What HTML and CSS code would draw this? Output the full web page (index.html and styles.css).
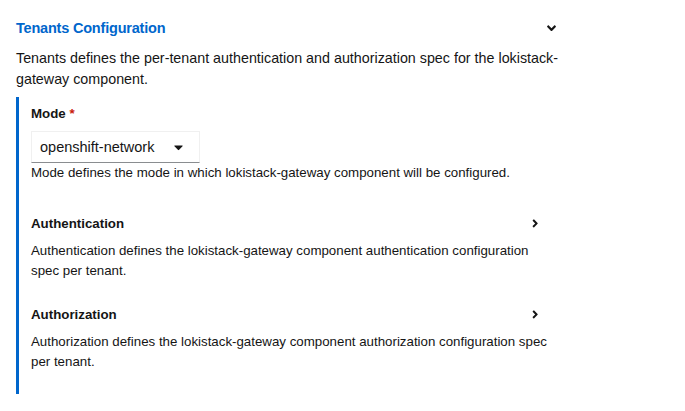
FILE: index.html
```html
<!DOCTYPE html>
<html lang="en">
<head>
<meta charset="utf-8">
<title>Tenants Configuration</title>
<link rel="stylesheet" href="styles.css">
</head>
<body>
<div class="page">
  <section class="section">
    <div class="section-header">
      <h2 class="title">Tenants Configuration</h2>
      <span class="toggle">
        <svg class="icon-down" viewBox="0 0 320 512" aria-hidden="true"><path d="M143 352.3L7 216.3c-9.4-9.4-9.4-24.6 0-33.9l22.6-22.6c9.4-9.4 24.6-9.4 33.9 0l96.4 96.4 96.4-96.4c9.4-9.4 24.6-9.4 33.9 0l22.6 22.6c9.4 9.4 9.4 24.6 0 33.9l-136 136c-9.2 9.4-24.4 9.4-33.8 0z"/></svg>
      </span>
    </div>
    <p class="desc">Tenants defines the per-tenant authentication and authorization spec for the lokistack-gateway component.</p>
    <div class="group">
      <div class="field">
        <label class="label">Mode <span class="req">*</span></label>
        <div class="select">
          <span class="select-text">openshift-network</span>
          <svg class="icon-caret" viewBox="0 0 320 512" aria-hidden="true"><path d="M31.3 192h257.3c17.8 0 26.7 21.5 14.1 34.1L174.1 354.8c-7.8 7.8-20.5 7.8-28.3 0L17.2 226.1C4.6 213.5 13.5 192 31.3 192z"/></svg>
        </div>
        <p class="help">Mode defines the mode in which lokistack-gateway component will be configured.</p>
      </div>
      <div class="item">
        <div class="item-header">
          <span class="item-title">Authentication</span>
          <svg class="icon-right" viewBox="0 0 256 512" aria-hidden="true"><path d="M224.3 273l-136 136c-9.4 9.4-24.6 9.4-33.9 0l-22.6-22.6c-9.4-9.4-9.4-24.6 0-33.9l96.4-96.4-96.4-96.4c-9.4-9.4-9.4-24.6 0-33.9L54.3 103c9.4-9.4 24.6-9.4 33.9 0l136 136c9.5 9.4 9.5 24.6.1 34z"/></svg>
        </div>
        <p class="item-desc">Authentication defines the lokistack-gateway component authentication configuration spec per tenant.</p>
      </div>
      <div class="item item-second">
        <div class="item-header">
          <span class="item-title">Authorization</span>
          <svg class="icon-right" viewBox="0 0 256 512" aria-hidden="true"><path d="M224.3 273l-136 136c-9.4 9.4-24.6 9.4-33.9 0l-22.6-22.6c-9.4-9.4-9.4-24.6 0-33.9l96.4-96.4-96.4-96.4c-9.4-9.4-9.4-24.6 0-33.9L54.3 103c9.4-9.4 24.6-9.4 33.9 0l136 136c9.5 9.4 9.5 24.6.1 34z"/></svg>
        </div>
        <p class="item-desc">Authorization defines the lokistack-gateway component authorization configuration spec per tenant.</p>
      </div>
    </div>
  </section>
</div>
</body>
</html>
```

FILE: styles.css
```css
* { box-sizing: border-box; }
html, body { margin: 0; padding: 0; background: #fff; }
body {
  font-family: "Liberation Sans", Arial, sans-serif;
  color: #151515;
  font-size: 13.3px;
}
.page { padding: 16px 0 0 16px; }
.section { width: 540px; }
.section-header {
  display: flex;
  align-items: center;
  justify-content: space-between;
  height: 24px;
}
.title {
  margin: 0;
  font-size: 14.5px;
  line-height: 24px;
  font-weight: 700;
  letter-spacing: -0.2px;
  color: #0066cc;
}
.toggle { display: flex; align-items: center; }
.icon-down { width: 9px; height: 14.4px; fill: #151515; display: block; }
.desc {
  margin: 8px -6px 7px 0;
  font-size: 14.3px;
  line-height: 21px;
}
.group {
  border-left: 3px solid #0066cc;
  padding: 6px 0 22px 12px;
}
.label {
  display: block;
  font-weight: 700;
  line-height: 21px;
}
.req { color: #c9190b; }
.select {
  margin-top: 7px;
  width: 169px;
  height: 32px;
  display: flex;
  align-items: center;
  justify-content: space-between;
  padding: 0 16px 0 8px;
  border: 1px solid #f0f0f0;
  border-bottom-color: #8a8d90;
  font-size: 14.5px;
  line-height: 21px;
}
.icon-caret { width: 9px; height: 14.4px; fill: #151515; display: block; }
.help {
  margin: 0;
  line-height: 20px;
}
.item { margin-top: 30px; }
.item-second { margin-top: 23px; }
.item-header {
  display: flex;
  align-items: center;
  justify-content: space-between;
  padding-right: 18px;
  line-height: 21px;
}
.item-title { font-weight: 700; }
.icon-right { width: 6.4px; height: 12.8px; fill: #151515; display: block; }
.item-desc {
  margin: 7px 0 0;
  line-height: 20px;
}
```
